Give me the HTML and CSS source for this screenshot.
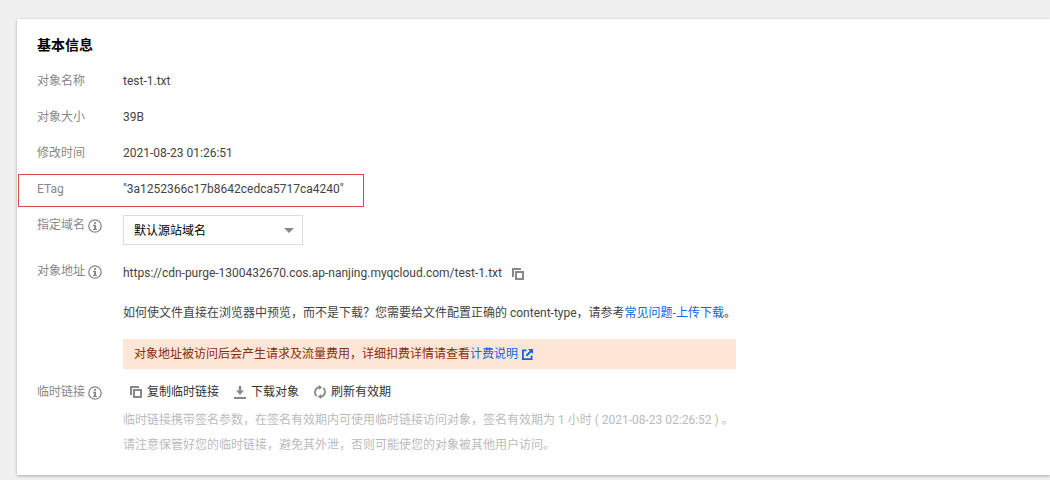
FILE: index.html
```html
<!DOCTYPE html>
<html lang="zh-CN">
<head>
<meta charset="utf-8">
<title>基本信息</title>
<link rel="stylesheet" href="styles.css">
</head>
<body>
<svg class="sprite" aria-hidden="true">
  <symbol id="info" viewBox="0 0 14 14">
    <circle cx="7" cy="7" r="6.2" fill="none" stroke="currentColor" stroke-width="1.3"/>
    <path d="M6 3h2v1.700H6zM5 5.800h3v4.200h1v1H5v-1h1V7H5z" fill="currentColor"/>
  </symbol>
  <symbol id="copy" viewBox="0 0 12 12">
    <path d="M0 0h9v2H2v7H0zM3 3h9v9H3zM5 5v5h5V5z" fill="currentColor" fill-rule="evenodd"/>
  </symbol>
  <symbol id="download" viewBox="0 0 12 14">
    <path d="M4.800 1h2.400v4.500h2.800L6 10 2 5.500h2.800zM0 12h12v2H0z" fill="currentColor"/>
  </symbol>
  <symbol id="refresh" viewBox="0 0 12 14">
    <path d="M2.700 11.200A5.200 5.200 0 0 1 5.500 2.200M9.300 2.800A5.200 5.200 0 0 1 6.500 11.800" fill="none" stroke="currentColor" stroke-width="1.800"/>
    <path d="M4.800 0l3.400 2.300-3.400 2.700zM7.200 9v5L3.800 11.700z" fill="currentColor"/>
  </symbol>
  <symbol id="external" viewBox="0 0 11 11">
    <path d="M0 0.500h4.500v1.800H1.800v6.900h6.900V6.500h1.800V11H0zM6 0h5v5L9.300 3.300 5.200 7.400 3.700 5.900 7.800 1.800z" fill="currentColor"/>
  </symbol>
</svg>
<main class="card">
  <h1 class="title">基本信息</h1>
  <dl class="info">
    <div class="row"><dt class="label">对象名称</dt><dd class="value">test-1.txt</dd></div>
    <div class="row"><dt class="label">对象大小</dt><dd class="value">39B</dd></div>
    <div class="row"><dt class="label">修改时间</dt><dd class="value">2021-08-23 01:26:51</dd></div>
    <div class="row row-marked"><dt class="label">ETag</dt><dd class="value">"3a1252366c17b8642cedca5717ca4240"</dd></div>
    <div class="row">
      <dt class="label"><label for="domain">指定域名</label><svg class="icon-info"><use href="#info"/></svg></dt>
      <dd class="value">
        <div class="select-wrap">
          <select class="select" id="domain"><option>默认源站域名</option></select>
          <span class="arrow"></span>
        </div>
      </dd>
    </div>
    <div class="row row-address">
      <dt class="label">对象地址<svg class="icon-info"><use href="#info"/></svg></dt>
      <dd class="value">
        <div class="url"><span>https://cdn-purge-1300432670.cos.ap-nanjing.myqcloud.com/test-1.txt</span><button class="copy" type="button" aria-label="复制"><svg class="icon"><use href="#copy"/></svg></button></div>
        <p class="tip">如何使文件直接在浏览器中预览，而不是下载？您需要给文件配置正确的 content-type，请参考<a class="link" href="#">常见问题-上传下载</a>。</p>
        <p class="notice">对象地址被访问后会产生请求及流量费用，详细扣费详情请查看<a class="link" href="#">计费说明<svg class="icon-external"><use href="#external"/></svg></a></p>
      </dd>
    </div>
    <div class="row">
      <dt class="label">临时链接<svg class="icon-info"><use href="#info"/></svg></dt>
      <dd class="value">
        <div class="actions">
          <button class="action" type="button"><svg class="icon"><use href="#copy"/></svg>复制临时链接</button>
          <button class="action" type="button"><svg class="icon icon-tall"><use href="#download"/></svg>下载对象</button>
          <button class="action" type="button"><svg class="icon icon-tall"><use href="#refresh"/></svg>刷新有效期</button>
        </div>
        <p class="help">临时链接携带签名参数，在签名有效期内可使用临时链接访问对象，签名有效期为 1 小时 ( 2021-08-23 02:26:52 ) 。</p>
        <p class="help">请注意保管好您的临时链接，避免其外泄，否则可能使您的对象被其他用户访问。</p>
      </dd>
    </div>
  </dl>
</main>
</body>
</html>
```

FILE: styles.css
```css
*, *::after { box-sizing: border-box; }
body {
  margin: 0;
  padding: 19px 0 5px 17px;
  background: #f0f0f0;
  color: #444;
  font: 12px/20px Roboto, "Noto Sans CJK SC", sans-serif;
}
.sprite { position: absolute; width: 0; height: 0; }
.card {
  padding: 16px 20px 9px;
  background: #fff;
  box-shadow: 0 1px 3px rgba(0, 0, 0, 0.3);
}
.title {
  margin: 0 0 8px;
  color: #000;
  font-size: 14px;
  line-height: 20px;
  font-weight: 700;
}
.info, .value, .tip, .notice, .help { margin: 0; }
.row {
  display: grid;
  grid-template-columns: 86px minmax(0, 1fr);
  padding: 8px 0;
}
.row-marked { position: relative; }
.row-marked::after {
  content: "";
  position: absolute;
  left: -19px;
  top: 3px;
  width: 346px;
  height: 33px;
  border: 1px solid #d9484c;
}
.row-address { padding-bottom: 5px; }
.label {
  display: flex;
  align-items: center;
  align-self: start;
  gap: 3px;
  color: #888;
}
.icon-info { width: 14px; height: 14px; margin-top: 2px; }
.select-wrap { position: relative; width: 180px; }
.select {
  display: block;
  width: 100%;
  height: 30px;
  padding: 1px 10px 0;
  border: 1px solid #ddd;
  border-radius: 0;
  background: #fff;
  color: #000;
  font: inherit;
  appearance: none;
}
.arrow {
  position: absolute;
  right: 9px;
  top: 13px;
  border: 5px solid transparent;
  border-top-color: #888;
  border-bottom: 0;
  pointer-events: none;
}
.url { display: flex; align-items: center; gap: 10px; line-height: 24px; }
.icon { width: 12px; height: 12px; color: #888; }
.icon-tall { height: 14px; }
.copy { display: flex; padding: 2px 0 0; border: 0; background: none; }
.tip { margin-top: 18px; }
.notice {
  width: 613px;
  max-width: 100%;
  margin-top: 16px;
  padding: 5px 11px;
  background: #fde6d5;
  color: #8b2c0b;
}
.link { color: #0d66e4; text-decoration: none; }
.icon-external { width: 11px; height: 11px; margin-left: 4px; vertical-align: -2px; }
.actions { display: flex; gap: 15px; padding-left: 7px; margin-bottom: 6px; }
.action {
  display: flex;
  align-items: center;
  gap: 5px;
  padding: 0;
  border: 0;
  background: none;
  color: #333;
  font: inherit;
}
.help { color: #bbb; line-height: 25px; }
```
